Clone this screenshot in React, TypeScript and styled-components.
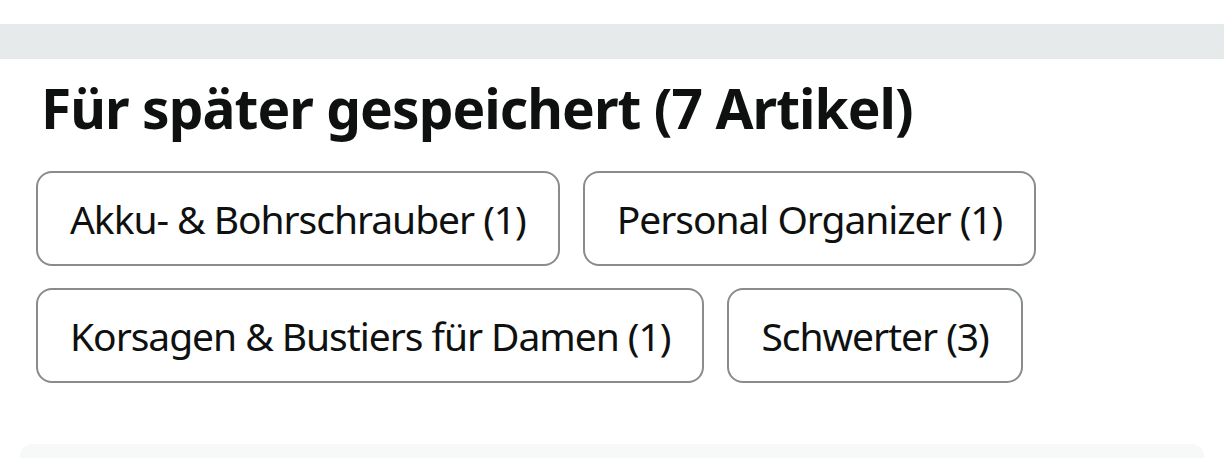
import React from "react";
import styled, { createGlobalStyle } from "styled-components";

const Global = createGlobalStyle`
  html, body { margin: 0; padding: 0; background: #fff; }
  body { font-family: "Noto Sans", "DejaVu Sans", sans-serif; color: #0f1111; }
`;

const Page = styled.div`
  display: flex;
  flex-direction: column;
  padding-top: 24px;
`;

const Band = styled.div`
  height: 35px;
  background: #e7eaea;
`;

const Main = styled.div`
  padding: 0 20px;
`;

const Section = styled.section`
  padding: 13px 16px 0;
`;

const Heading = styled.h2`
  margin: 0;
  padding-left: 5px;
  font-size: 55px;
  line-height: 72px;
  font-weight: 700;
  letter-spacing: -0.95px;
  color: #0f1111;
`;

const Chips = styled.div`
  display: flex;
  flex-wrap: wrap;
  gap: 22px 23px;
  margin-top: 27px;
  width: 1150px;
`;

const Chip = styled.button`
  height: 95px;
  box-sizing: border-box;
  padding: 0 32px;
  border: 2px solid #888c8c;
  border-radius: 16px;
  background: #fff;
  font-family: inherit;
  font-size: 39px;
  letter-spacing: -1.05px;
  color: #0f1111;
  cursor: pointer;
`;

const Footer = styled.div`
  margin-top: 61px;
  height: 40px;
  background: #f7f8f8;
  border-radius: 12px;
`;

const chips = [
  "Akku- & Bohrschrauber (1)",
  "Personal Organizer (1)",
  "Korsagen & Bustiers für Damen (1)",
  "Schwerter (3)",
];

export default function App() {
  return (
    <Page>
      <Global />
      <Band />
      <Main>
        <Section>
          <Heading>Für später gespeichert (7 Artikel)</Heading>
          <Chips>
            {chips.map((c) => (
              <Chip key={c}>{c}</Chip>
            ))}
          </Chips>
        </Section>
        <Footer />
      </Main>
    </Page>
  );
}
